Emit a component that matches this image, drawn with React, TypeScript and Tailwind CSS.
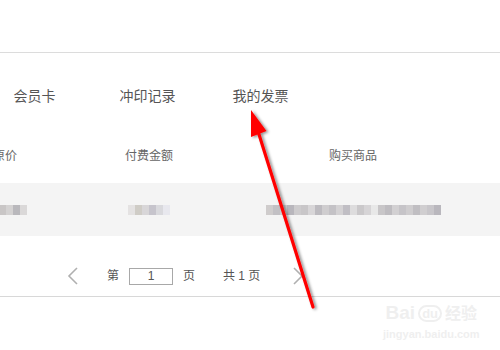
import React from 'react';

const tabs = ['会员卡', '冲印记录', '我的发票'];
const heads = ['原价', '付费金额', '购买商品'];

// pixelated (mosaic) cell values
const mosaic: string[][] = [
  ['#c9c6c6', '#d4d2d2', '#b9b8bc', '#dad8d8', '#c8c6c8', '#d6d4d6'],
  ['#e4e2e2', '#cfccc6', '#d8d6d8', '#c6c4cc', '#d9d9dd', '#e8e8ee'],
  ['#cfcccc', '#c2c0c4', '#d0ced0', '#b8b6bc', '#cdcbcd', '#c8c6c8', '#d8d6d8', '#bdbbc0', '#cfcdcf', '#c4c2c6', '#d4d2d4', '#c0bec4', '#dddcdd', '#cac8ca', '#d6d4d6', '#e8e8e8', '#c8c6c8', '#bebcc0', '#d2d0d2', '#c6c4c8', '#cfcdcf', '#c0bec2', '#d0ced0', '#c8c6ca', '#b9b7bd'],
];

const Blur = ({ cells }: { cells: string[] }) => (
  <div className="flex h-[10px] blur-[0.6px]">
    {cells.map((c, i) => (
      <span key={i} className="w-[7px] h-full" style={{ background: c }} />
    ))}
  </div>
);

export default function App() {
  return (
    <div
      className="relative w-[500px] h-[350px] overflow-hidden bg-white text-[#555]"
      style={{ fontFamily: '"Liberation Sans", "Noto Sans CJK SC", sans-serif' }}
    >
      <div className="h-[53px] border-b border-[#dcdcdc]" />

      {/* tabs */}
      <div className="flex ml-[-22px] pt-[33px] h-[87px] text-[14px] leading-[20px]">
        {tabs.map((t) => (
          <div key={t} className="w-[113px] text-center">{t}</div>
        ))}
      </div>

      {/* table header */}
      <div className="flex ml-[-65px] pt-[8px] h-[43px] text-[12px] leading-[16px] text-[#666]">
        <div className="w-[140px] text-center">{heads[0]}</div>
        <div className="w-[148px] text-center">{heads[1]}</div>
        <div className="w-[260px] text-center">{heads[2]}</div>
      </div>

      {/* row */}
      <div className="flex ml-[-65px] h-[53px] items-center bg-[#f4f4f4]">
        <div className="w-[140px] flex justify-center pl-[15px]"><Blur cells={mosaic[0].slice(0, 4)} /></div>
        <div className="w-[148px] flex justify-center"><Blur cells={mosaic[1]} /></div>
        <div className="w-[260px] flex justify-center"><Blur cells={mosaic[2]} /></div>
      </div>

      {/* pagination */}
      <div className="flex items-center h-[61px] pt-[20px] border-b border-[#d8d8d8] text-[12px] text-[#555]">
        <svg className="ml-[67px] w-[11px] h-[18px]" viewBox="0 0 11 18">
          <path d="M10 1 L2 9 L10 17" fill="none" stroke="#b0b0b0" strokeWidth="1.6" />
        </svg>
        <span className="ml-[29px]">第</span>
        <div className="ml-[10px] w-[44px] h-[17px] border border-[#a8a8a8] flex items-center justify-center text-[12px] leading-none">1</div>
        <span className="ml-[10px]">页</span>
        <span className="ml-[28px]">共 1 页</span>
        <svg className="ml-[33px] w-[11px] h-[18px]" viewBox="0 0 11 18">
          <path d="M1 1 L9 9 L1 17" fill="none" stroke="#b0b0b0" strokeWidth="1.6" />
        </svg>
      </div>

      {/* watermark */}
      <div className="absolute left-[383px] top-[303px] flex flex-col items-center text-[#efefef] select-none">
        <div className="flex items-end gap-[3px] leading-none">
          <span className="text-[19px] font-bold">Bai</span>
          <span className="text-[13px] font-bold border-2 border-[#efefef] rounded-full px-[2px]">du</span>
          <span className="text-[16px] font-bold">经验</span>
        </div>
        <span className="text-[11px] font-bold mt-[4px]">jingyan.baidu.com</span>
      </div>

      {/* red arrow overlay */}
      <svg className="absolute left-0 top-0 w-[500px] h-[350px] pointer-events-none" viewBox="0 0 500 350">
        <defs>
          <filter id="sh" x="-50%" y="-50%" width="200%" height="200%">
            <feDropShadow dx="2" dy="1" stdDeviation="1.6" floodColor="#000" floodOpacity="0.45" />
          </filter>
        </defs>
        <g filter="url(#sh)">
          <line x1="313" y1="307" x2="257" y2="128" stroke="#ff0000" strokeWidth="3.2" strokeLinecap="round" />
          <polygon points="251,110 266.5,131 251,137" fill="#ff0000" />
        </g>
      </svg>
    </div>
  );
}
